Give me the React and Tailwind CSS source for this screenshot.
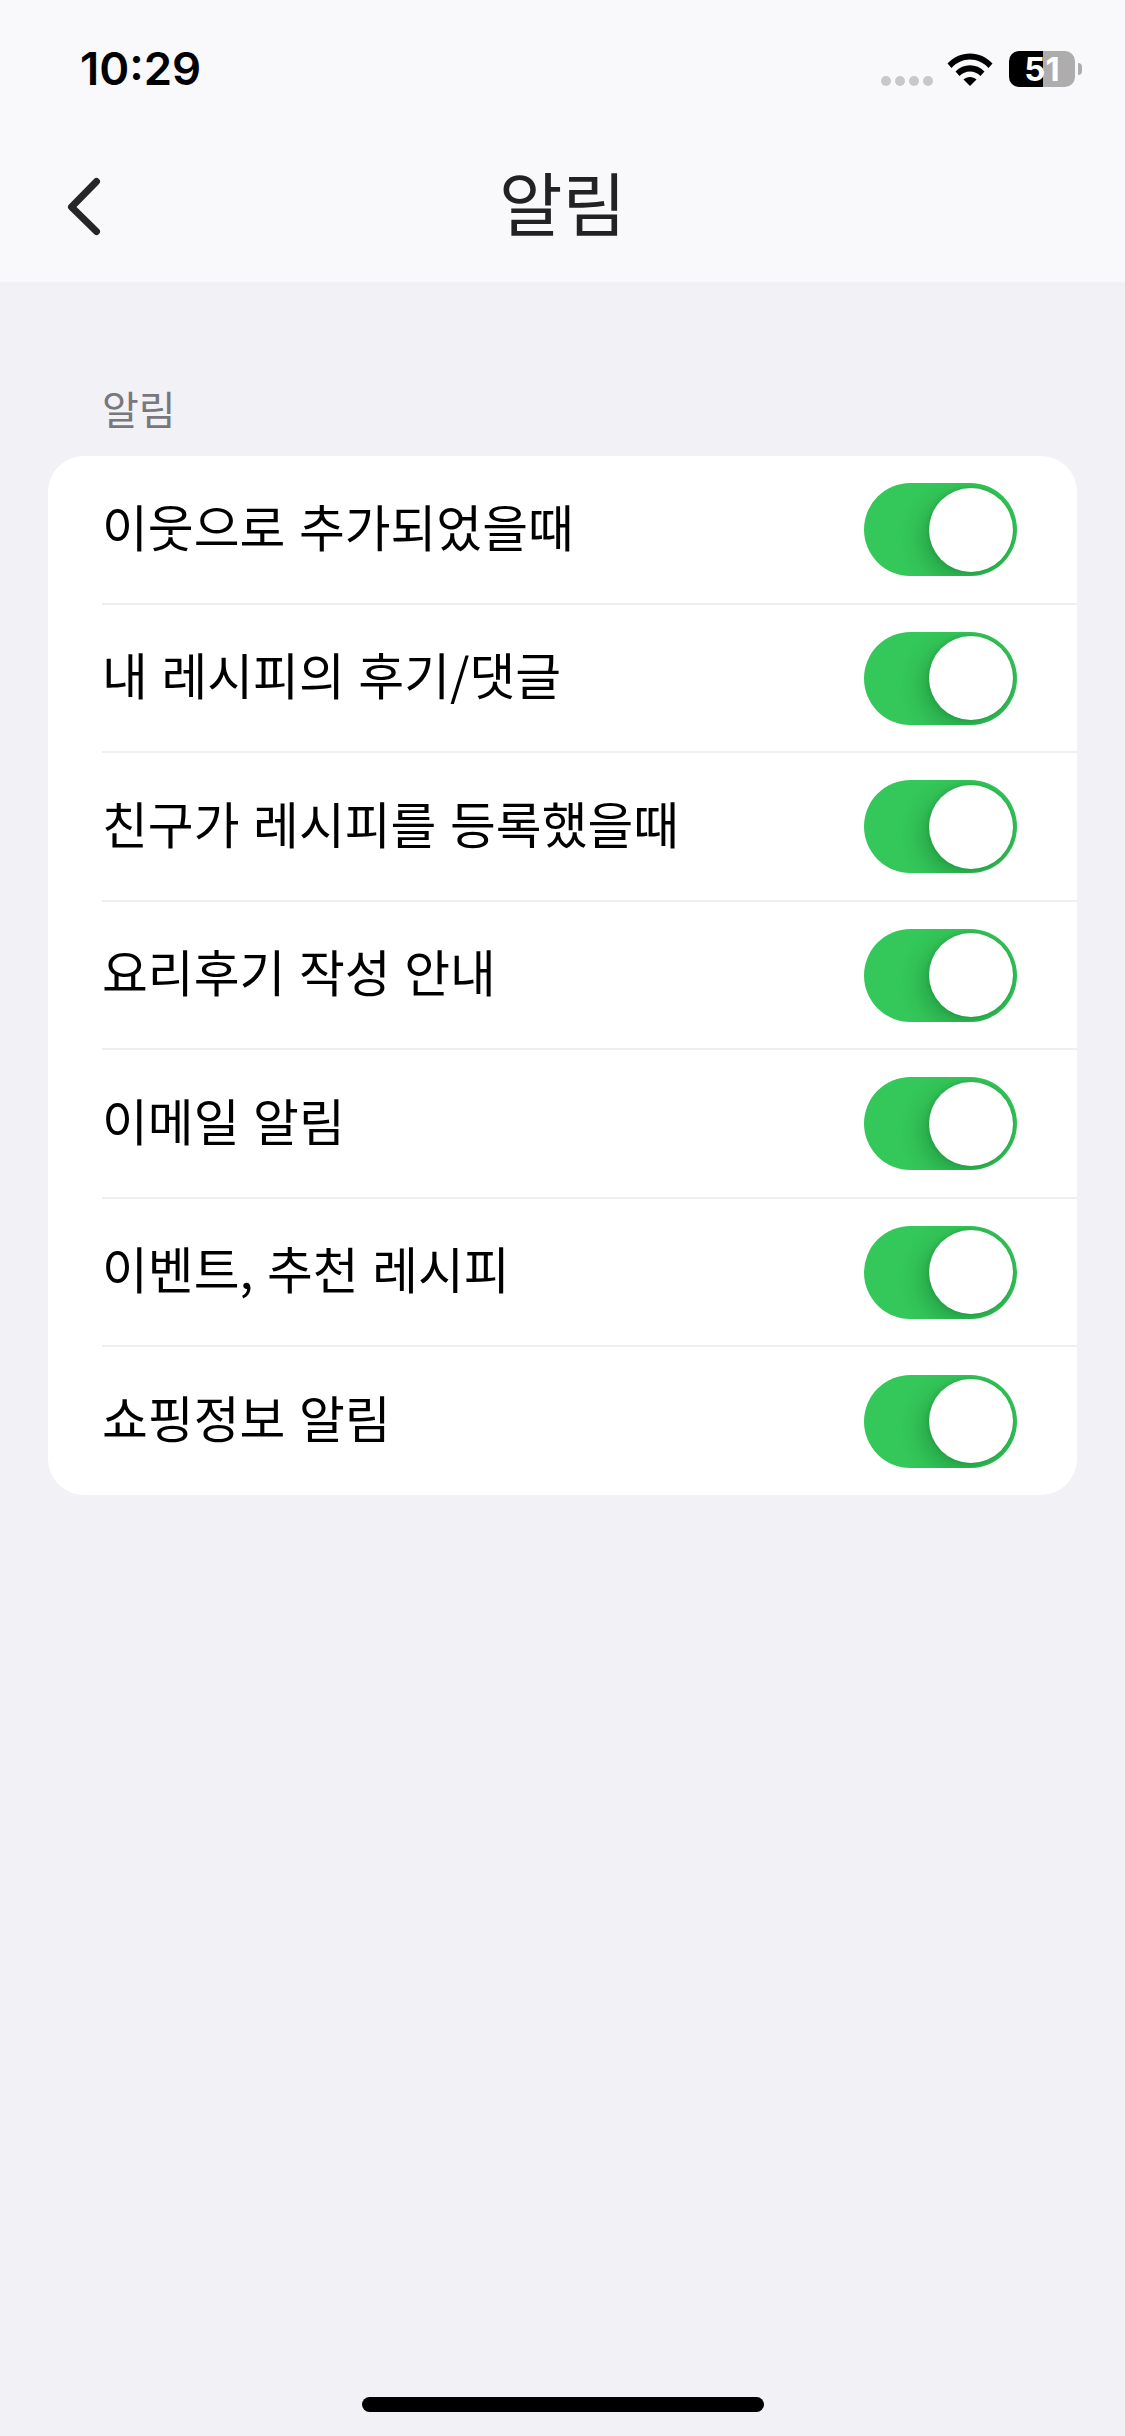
const items = [
  "이웃으로 추가되었을때",
  "내 레시피의 후기/댓글",
  "친구가 레시피를 등록했을때",
  "요리후기 작성 안내",
  "이메일 알림",
  "이벤트, 추천 레시피",
  "쇼핑정보 알림",
];

const Toggle = () => (
  <div className="flex h-[93px] w-[153px] items-center justify-end overflow-hidden rounded-full bg-[#34c759] pr-[4.5px]">
    <div className="h-[84px] w-[84px] rounded-full bg-white shadow-[-6px_8px_22px_rgba(0,70,30,0.3),0_0_5px_rgba(0,70,30,0.2)]" />
  </div>
);

const Wifi = () => (
  <svg width="46" height="33" viewBox="0 0 46 33" fill="#000">
    <path d="M0.5 10.5C6.5 4 14.500 0.500 23 0.500C31.500 0.500 39.500 4 45.500 10.500L41.500 15C36.500 9.500 30 6.500 23 6.500C16 6.500 9.500 9.500 4.500 15Z" />
    <path d="M8.500 18.500C12.500 14.500 17.500 12.300 23 12.300C28.500 12.300 33.500 14.500 37.500 18.500L33.500 23C30.500 20 27 18.400 23 18.400C19 18.400 15.500 20 12.500 23Z" />
    <path d="M16.500 26.500C18.300 24.900 20.500 24 23 24C25.500 24 27.700 24.900 29.500 26.500L23 33Z" />
  </svg>
);

const StatusBar = () => (
  <div className="flex h-[130px] items-center justify-between pl-[80px] pr-[43px] pt-[8px]">
    <span className="font-['Inter',sans-serif] text-[45.5px] font-semibold leading-none text-black">10:29</span>
    <div className="flex items-center">
      <div className="mr-[14px] mt-[24px] flex gap-[4px]">
        <div className="h-[10px] w-[10px] rounded-full bg-[#c8c8c8]" />
        <div className="h-[10px] w-[10px] rounded-full bg-[#c8c8c8]" />
        <div className="h-[10px] w-[10px] rounded-full bg-[#c8c8c8]" />
        <div className="h-[10px] w-[10px] rounded-full bg-[#c8c8c8]" />
      </div>
      <Wifi />
      <div className="ml-[16px] flex h-[36px] w-[66px] items-center justify-center rounded-[10px] bg-[linear-gradient(90deg,#000_51%,#adadad_51%)] font-['Inter',sans-serif] text-[33px] font-bold leading-none text-white">
        51
      </div>
      <div className="ml-[3px] h-[12px] w-[4px] rounded-r-full bg-[#adadad]" />
    </div>
  </div>
);

export default function App() {
  return (
    <div className="flex h-[2436px] w-[1125px] flex-col overflow-hidden bg-[#f1f1f6] font-['Noto_Sans_CJK_KR',sans-serif]">
      <div className="h-[282px] bg-[#f9f9fb]">
        <StatusBar />
        <div className="grid h-[152px] grid-cols-3 items-center">
          <div className="pl-[66px]">
            <svg width="36" height="60" viewBox="0 0 36 60" fill="none" stroke="#262626" strokeWidth="7" strokeLinecap="round" strokeLinejoin="round">
              <path d="M30.500 5.500L5.500 31L30.500 55.500" />
            </svg>
          </div>
          <div className="pb-[10px] text-center text-[69px] leading-none text-[#222222]">알림</div>
        </div>
      </div>

      <div className="px-[48px]">
        <div className="flex h-[174px] items-end pb-[23px] pl-[54px] text-[40px] leading-[50px] text-[#77777d]">알림</div>
        <div className="overflow-hidden rounded-[36px] bg-white">
          {items.map((label, i) => (
            <div key={label} className="pl-[54px]">
              <div className={i < items.length - 1 ? "flex h-[148.5px] items-center justify-between border-b-2 border-[#efeff2] pr-[60px] pt-[1px]" : "flex h-[148px] items-center justify-between pr-[60px]"}>
                <span className="pb-[8px] text-[49.8px] leading-none text-black [word-spacing:2.5px]">{label}</span>
                <Toggle />
              </div>
            </div>
          ))}
        </div>
      </div>

      <div className="mt-auto flex justify-center pb-[24px]">
        <div className="h-[15px] w-[402px] rounded-full bg-black" />
      </div>
    </div>
  );
}
